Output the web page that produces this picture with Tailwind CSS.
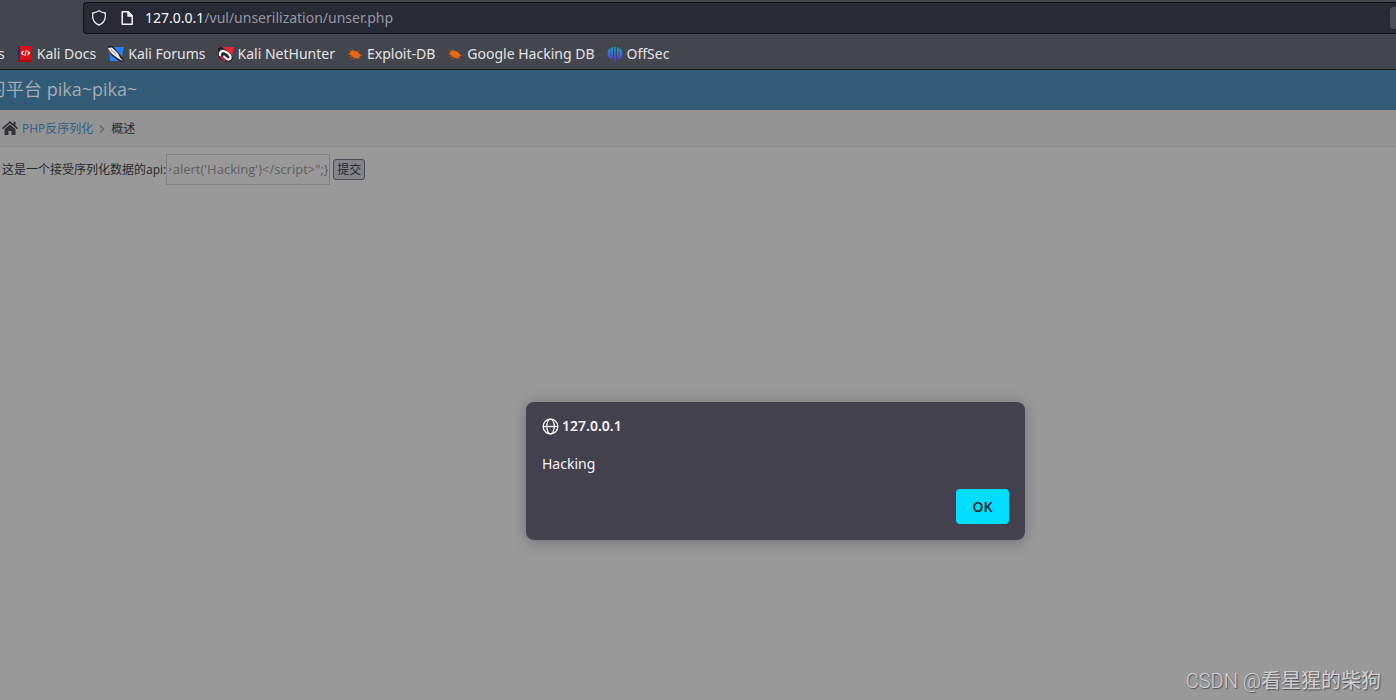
<!DOCTYPE html>
<html lang="zh-CN">
<head>
<meta charset="utf-8">
<meta name="viewport" content="width=device-width, initial-scale=1">
<title>PHP反序列化</title>
<script src="https://cdn.jsdelivr.net/npm/@tailwindcss/browser@4"></script>
</head>
<body class="relative flex min-h-screen flex-col overflow-x-hidden bg-[#99999a] font-['Open_Sans','Noto_Sans_CJK_SC',sans-serif] text-[#28292c]">

<svg class="hidden" aria-hidden="true">
  <symbol id="bug" viewBox="0 0 16 16">
    <g fill="none" stroke="#c8601f" stroke-width=".6" stroke-linecap="round"><path d="M5 6 1.500 4M4 8H1M5 10l-3 1M8 12l-4 1M7 5 5 3.500M10 6l2-1.500M13 9l2 .2M12 12l1.500 1.500"/></g>
    <path fill="#ee6712" d="M3 5.500 5.500 4.500l4 .8 3 2.500 1.500 2.200-1.500.5-.5 1.500-2.500.5-3.500-1.500L3.500 9 2 7.500l1.500-.7z"/>
  </symbol>
</svg>

<header class="bg-[#44464e] font-['Noto_Sans',sans-serif] text-sm text-[#e3e3e5]">
  <div class="flex pt-[2px] pl-[83px]">
    <div class="flex h-8 flex-1 items-center overflow-hidden rounded-l-sm border border-r-0 border-[#101116] bg-[#282a36] pl-[7px]">
      <svg class="mr-3 size-4 shrink-0" viewBox="0 0 16 16" fill="none" stroke="#f2f2f4" stroke-width="1.300" stroke-linejoin="round"><path d="M8 .8c2 1.300 4 2 6.300 2.200v3.500c0 4-2.500 7-6.300 8.700-3.800-1.700-6.300-4.700-6.300-8.700V3C4 2.800 6 2.100 8 .8z"/></svg>
      <svg class="mr-[10px] size-4 shrink-0" viewBox="0 0 16 16" fill="none" stroke="#f2f2f4" stroke-width="1.500" stroke-linejoin="round"><path d="M3.200 1.800h6l4 4v8.400h-10z"/><path fill="#f2f2f4" d="M9 2v4h4z"/></svg>
      <p class="flex-1 whitespace-nowrap text-[#9798a0]"><span class="text-[#f8f8fa]">127.0.0.1</span>/vul/unserilization/unser.php</p>
      <div class="h-[22px] w-[6px] rounded-l-sm bg-[#4b4d57]"></div>
    </div>
  </div>
  <nav class="flex h-9 items-center gap-3 border-b border-[#101116] pt-1 whitespace-nowrap">
    <a href="#" class="-ml-[2px]">s</a>
    <a href="#" class="flex items-center gap-1">
      <svg class="size-4" viewBox="0 0 16 16"><path fill="#20316c" d="M1 0h3v15H1z"/><path fill="#d91116" d="M3 0h11v14H3z"/><path fill="#a50d15" d="M1 14h13v2H1z"/><path fill="none" stroke="#fff" stroke-width="1.100" d="M6.500 5 4.500 7l2 2M10.500 5l2 2-2 2M9 4 8 10"/></svg>
      Kali Docs</a>
    <a href="#" class="flex items-center gap-1">
      <svg class="size-4" viewBox="0 0 16 16"><path fill="#2381f5" d="M1 1h15l-3 14H2z"/><path fill="#20232b" d="M0 0h5l9 11 2 5-5-1L3 9z"/><path fill="#f3eee8" d="m0 2 4-.5 6 6 2 4 3 3.500-4-2-7-5L1 4z"/><path fill="none" stroke="#20232b" stroke-width=".5" d="m3 4 5 4"/></svg>
      Kali Forums</a>
    <a href="#" class="flex items-center gap-1">
      <svg class="size-4" viewBox="0 0 16 16"><path fill="#ee2630" d="M4 1h12l-3 13H3z"/><path fill="#20232b" d="M0 2 4 1l4 3 5 4 2 4-1 3-4 1-5-1-5-4z"/><path fill="none" stroke="#f7f3f3" stroke-width="2.400" stroke-linecap="round" d="M2 9C1.500 6 4 4 7 5.500c3 1.500 6 4 5.500 6.500-.5 2-3 2-5 0L6 10.500"/><path fill="#d51d39" d="M1 10h3l4 4-2 1.500z"/></svg>
      Kali NetHunter</a>
    <a href="#" class="flex items-center gap-1"><svg class="size-4"><use href="#bug"/></svg>Exploit-DB</a>
    <a href="#" class="flex items-center gap-1"><svg class="size-4"><use href="#bug"/></svg>Google Hacking DB</a>
    <a href="#" class="flex items-center gap-1">
      <svg class="size-4" viewBox="0 0 16 16"><defs><linearGradient id="offsec" gradientUnits="userSpaceOnUse" x1="0" y1="1" x2="0" y2="16"><stop stop-color="#10a5c4"/><stop offset="1" stop-color="#6529df"/></linearGradient></defs><g fill="url(#offsec)"><path d="M7.200 1h1.600v15H7.200z"/><path d="M6 1v10.500L4.300 14.500V1.800zM3.700 2v11.300C1.500 12 .5 10 .5 7.500s1-4.500 3.200-5.500zM10 1v10.500l1.700 3V1.800zM12.300 2v11.300c2.200-1.300 3.200-3.300 3.200-5.800s-1-4.500-3.200-5.500z"/></g></svg>
      OffSec</a>
  </nav>
</header>

<div class="flex h-10 items-center bg-[#325b77] pb-[2px] text-lg text-[#a3abb3]">
  <h1 class="-ml-3 whitespace-nowrap">习平台 pika~pika~</h1>
</div>

<nav class="flex h-[37px] items-center border-b border-[#89898a] bg-[#939394] pt-[2px] pl-[2px] text-xs">
  <svg class="mr-1 mb-[2px] h-[14px] w-4" viewBox="0 0 16 14" fill="#343438"><path d="M8 0 0 7l1 1.200 7-6 7 6L16 7l-2.500-2.300V.8h-2v2.100z"/><path d="m8 3.500-5.500 4.700V14h4v-4h3v4h4V8.200z"/></svg>
  <a href="#" class="text-[#345f82]">PHP反序列化</a>
  <svg class="mx-[6px] h-2 w-[6px]" viewBox="0 0 6 8" fill="none" stroke="#69696d" stroke-width="1.200"><path d="m1 .5 3.500 3.500L1 7.500"/></svg>
  <span>概述</span>
</nav>

<main class="flex-1 pt-[7px] pl-[2px]">
  <form class="flex items-center text-xs">
    <label for="payload">这是一个接受序列化数据的api:</label>
    <div class="mr-[3px] flex h-[31px] w-[164px] items-center border border-[#808082] pr-px pl-[2px]">
      <input id="payload" type="text" value="&lt;script&gt;alert('Hacking')&lt;/script&gt;&quot;;}" class="w-full min-w-0 bg-transparent text-[13px] text-[#606062] outline-none">
    </div>
    <button type="button" class="h-[21px] rounded-[3px] border border-[#4d4c57] bg-[#85848c] px-[3px]">提交</button>
  </form>
</main>

<div role="dialog" aria-labelledby="origin" class="absolute top-[402px] left-[526px] w-[499px] rounded-lg bg-[#44414e] p-4 font-['Noto_Sans',sans-serif] text-sm text-[#f5f4f8] shadow-[0_2px_14px_rgba(40,40,50,0.35)]">
  <h2 id="origin" class="flex h-4 items-center gap-[3px] font-semibold">
    <svg class="size-[17px]" viewBox="0 0 16 16" fill="none" stroke="#fbfbfe" stroke-width="1.200"><circle cx="8" cy="8" r="6.900"/><ellipse cx="8" cy="8" rx="3.500" ry="6.900"/><path d="M1 8h14"/></svg>
    127.0.0.1</h2>
  <p class="mt-5 leading-5">Hacking</p>
  <div class="mt-[15px] flex justify-end">
    <button type="button" class="h-[35px] w-[53px] rounded bg-[#00ddff] font-semibold text-[#2b2a33]">OK</button>
  </div>
</div>

<footer class="absolute right-[15px] bottom-[5px] font-['Roboto','Noto_Sans_CJK_SC',sans-serif] text-xl text-[#d0d0d1] [text-shadow:1px_1px_1px_#505052]"><span class="font-light">CSDN @</span>看星猩的柴狗</footer>

<script>
  // Keep the end of the long value in view.
  const field = document.getElementById('payload');
  const showEnd = () => { field.scrollLeft = 9999; };
  showEnd();
  window.addEventListener('load', () => { showEnd(); requestAnimationFrame(showEnd); });
</script>
</body>
</html>
